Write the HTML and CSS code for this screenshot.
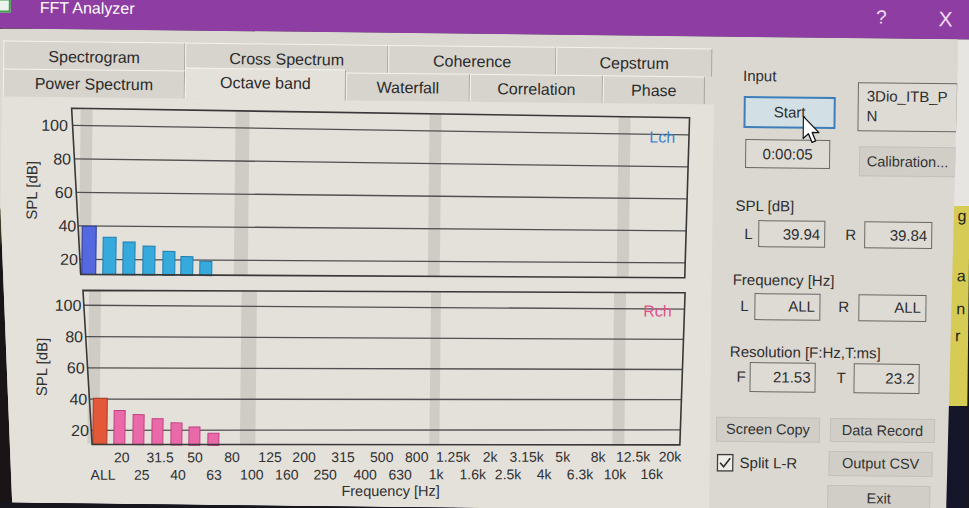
FILE: index.html
```html
<!DOCTYPE html>
<html lang="en">
<head>
<meta charset="utf-8">
<title>FFT Analyzer</title>
<link rel="stylesheet" href="styles.css">
</head>
<body>
<div class="screen">
  <header class="titlebar">
    <span class="app-icon"></span>
    <span class="title">FFT Analyzer</span>
    <span class="tb-help">?</span>
    <span class="tb-close">X</span>
  </header>
  <div class="main">
    <div class="window">
      <section class="tabs">
        <div class="tabrow back">
          <div class="tab w182">Spectrogram</div>
          <div class="tab w203">Cross Spectrum</div>
          <div class="tab w168">Coherence</div>
          <div class="tab w156">Cepstrum</div>
        </div>
        <div class="tabrow front">
          <div class="tab w182">Power Spectrum</div>
          <div class="tab w161 active">Octave band</div>
          <div class="tab w124">Waterfall</div>
          <div class="tab w133">Correlation</div>
          <div class="tab w102">Phase</div>
        </div>
        <div class="page">
          <svg class="charts" width="712" height="406" viewBox="0 0 712 406">
            <!-- upper chart (L channel) -->
            <g class="bands">
              <rect x="79" y="12" width="12" height="164"/>
              <rect x="234" y="12" width="14" height="164"/>
              <rect x="428" y="13" width="12" height="162"/>
              <rect x="617" y="13" width="12" height="161"/>
            </g>
            <g class="grid">
              <line x1="71.1" y1="28" x2="687.7" y2="30.6"/>
              <line x1="73.3" y1="61.5" x2="687.1" y2="62.6"/>
              <line x1="75.6" y1="95" x2="686.5" y2="94.6"/>
              <line x1="77.8" y1="128.4" x2="685.9" y2="126.6"/>
              <line x1="80" y1="161.9" x2="685.3" y2="158.6"/>
            </g>
            <g>
              <rect class="bar-all-l" x="82" y="128.7" width="14" height="48.1"/>
              <rect class="bar-l" x="103" y="139.5" width="13" height="37.3"/>
              <rect class="bar-l" x="123" y="144" width="12" height="32.8"/>
              <rect class="bar-l" x="143" y="148" width="12" height="28.8"/>
              <rect class="bar-l" x="163" y="153" width="12" height="23.8"/>
              <rect class="bar-l" x="181" y="158" width="12" height="18.8"/>
              <rect class="bar-l" x="200" y="162.5" width="12" height="14.3"/>
            </g>
            <polygon class="frame" points="70,11 688,13.5 685,173.5 81,177"/>
            <text class="ylab" x="66.5" y="33.8">100</text>
            <text class="ylab" x="70" y="67.3">80</text>
            <text class="ylab" x="72" y="100.8">60</text>
            <text class="ylab" x="76" y="134.2">40</text>
            <text class="ylab" x="78" y="167.7">20</text>
            <text class="axis-title" transform="translate(31 93.5) rotate(-90)">SPL [dB]</text>
            <text class="ch-l" x="648" y="38.6">Lch</text>

            <!-- lower chart (R channel) -->
            <g class="bands">
              <rect x="89.5" y="192" width="12" height="154"/>
              <rect x="242" y="191" width="15.5" height="155"/>
              <rect x="431.5" y="190" width="10" height="154"/>
              <rect x="614.5" y="189" width="12" height="153"/>
            </g>
            <g class="grid">
              <line x1="84.5" y1="207.8" x2="685.1" y2="204.9"/>
              <line x1="86.7" y1="239.05" x2="684.4" y2="235.1"/>
              <line x1="88.9" y1="270.3" x2="683.7" y2="265.25"/>
              <line x1="91.1" y1="301.55" x2="683" y2="295.4"/>
              <line x1="93.3" y1="332.8" x2="682.3" y2="325.6"/>
            </g>
            <g>
              <rect class="bar-all-r" x="95" y="300.6" width="14" height="45.9"/>
              <rect class="bar-r" x="116" y="312.6" width="11" height="33.9"/>
              <rect class="bar-r" x="135" y="316.5" width="11" height="30"/>
              <rect class="bar-r" x="154" y="320.4" width="11" height="26.1"/>
              <rect class="bar-r" x="173" y="324.3" width="11" height="22.2"/>
              <rect class="bar-r" x="191" y="328.3" width="11" height="18.2"/>
              <rect class="bar-r" x="210" y="334.3" width="11" height="12.2"/>
            </g>
            <polygon class="frame" points="83.4,192.9 685.5,188.5 682,340.6 94.3,346.8"/>
            <text class="ylab" x="82" y="213.6">100</text>
            <text class="ylab" x="84" y="244.9">80</text>
            <text class="ylab" x="86" y="276.1">60</text>
            <text class="ylab" x="89" y="307.4">40</text>
            <text class="ylab" x="91" y="338.6">20</text>
            <text class="axis-title" transform="translate(43 270) rotate(-90)">SPL [dB]</text>
            <text class="ch-r" x="644" y="212.6">Rch</text>

            <g class="xlabels" transform="rotate(-0.72 390 367)">
              <text x="124.2" y="361">20</text>
              <text x="162.5" y="361">31.5</text>
              <text x="197.5" y="361">50</text>
              <text x="234.5" y="361">80</text>
              <text x="272.5" y="361">125</text>
              <text x="306.5" y="361">200</text>
              <text x="345.5" y="361">315</text>
              <text x="384.2" y="361">500</text>
              <text x="419.2" y="361">800</text>
              <text x="455.5" y="361">1.25k</text>
              <text x="492.5" y="361">2k</text>
              <text x="529.2" y="361">3.15k</text>
              <text x="565.2" y="361">5k</text>
              <text x="600.5" y="361">8k</text>
              <text x="635.5" y="361">12.5k</text>
              <text x="672.5" y="361">20k</text>

              <text x="105.5" y="378.5">ALL</text>
              <text x="144.2" y="378.5">25</text>
              <text x="180.5" y="378.5">40</text>
              <text x="216.5" y="378.5">63</text>
              <text x="254.2" y="378.5">100</text>
              <text x="289.2" y="378.5">160</text>
              <text x="327.5" y="378.5">250</text>
              <text x="367.5" y="378.5">400</text>
              <text x="402.5" y="378.5">630</text>
              <text x="438.5" y="378.5">1k</text>
              <text x="475.2" y="378.5">1.6k</text>
              <text x="510.5" y="378.5">2.5k</text>
              <text x="546.5" y="378.5">4k</text>
              <text x="582.5" y="378.5">6.3k</text>
              <text x="617.5" y="378.5">10k</text>
              <text x="654.2" y="378.5">16k</text>

              <text class="freq-title" x="393" y="395">Frequency [Hz]</text>
            </g>
          </svg>
        </div>
      </section>

      <aside class="controls">
        <div class="top">
          <div class="col-l">
            <span class="lbl-input">Input</span>
            <div class="start">Start
              <svg class="cursor" viewBox="0 0 12.5 19.5" width="18" height="28">
                <path d="M0.5 0.5 V16 L4.2 12.6 L6.8 18.6 L9.3 17.5 L6.8 11.7 H11.5 Z"/>
              </svg>
            </div>
            <div class="field time">0:00:05</div>
          </div>
          <div class="col-r">
            <div class="device">3Dio_ITB_P<br>N</div>
            <div class="btn calib">Calibration...</div>
          </div>
        </div>

        <span class="lbl-spl">SPL [dB]</span>
        <div class="pair row-spl">
          <span class="k">L</span><span class="field f1">39.94</span>
          <span class="k k2">R</span><span class="field f2">39.84</span>
        </div>

        <span class="lbl-freq">Frequency [Hz]</span>
        <div class="pair row-freq">
          <span class="k">L</span><span class="field f1">ALL</span>
          <span class="k k2">R</span><span class="field f2">ALL</span>
        </div>

        <span class="lbl-res">Resolution [F:Hz,T:ms]</span>
        <div class="pair row-res">
          <span class="k">F</span><span class="field f1">21.53</span>
          <span class="k k2">T</span><span class="field f2">23.2</span>
        </div>

        <div class="row-btn1">
          <div class="btn screen-copy">Screen Copy</div>
          <div class="btn data-record">Data Record</div>
        </div>
        <div class="row-btn2">
          <div class="check">
            <svg class="checkbox" viewBox="0 0 17 18" width="17" height="18">
              <rect x="0.75" y="0.75" width="15.5" height="16.5"/>
              <polyline points="3.5,9 7,13 13.5,4.5"/>
            </svg>
            <span class="check-label">Split L-R</span>
          </div>
          <div class="btn output-csv">Output CSV</div>
        </div>
        <div class="btn exit">Exit</div>
      </aside>
    </div>
    <div class="beyond">
      <span class="bg-g">g</span>
      <span class="bg-a">a</span>
      <span class="bg-n">n</span>
      <span class="bg-r">r</span>
    </div>
  </div>
</div>
</body>
</html>
```

FILE: styles.css
```css
* { box-sizing: border-box; }

html, body {
  margin: 0;
  padding: 0;
  width: 969px;
  height: 508px;
  overflow: hidden;
  background: #17161f;
}

.screen {
  width: 989px;
  height: 528px;
  margin: -10px;
  padding: 10px;
  display: flex;
  flex-direction: column;
  background: #17161f;
  transform: rotate(0.65deg);
  transform-origin: 494.5px 264px;
  font-family: "Liberation Sans", Arial, sans-serif;
  color: #2e2e2e;
}

/* ---------- title bar ---------- */
.titlebar {
  flex: none;
  height: 44px;
  margin: -10px -10px 0;
  padding: 10px 10px 0;
  display: flex;
  align-items: flex-start;
  background: #8e3da2;
  color: #ffffff;
}
.app-icon {
  flex: none;
  width: 14px;
  height: 14px;
  margin: 4px 0 0 -6px;
  border: 2px solid #3f9f4f;
  background: #eef2ec;
}
.title {
  margin: 4px 0 0 29px;
  font-size: 16px;
  line-height: 18px;
}
.tb-help {
  margin: 3px 0 0 auto;
  font-size: 19px;
  line-height: 20px;
  color: #f3dcf3;
}
.tb-close {
  margin: 3px 19px 0 52px;
  font-size: 21px;
  line-height: 22px;
  color: #f3dcf3;
}

/* ---------- main area ---------- */
.main {
  flex: 1;
  min-height: 0;
  display: flex;
  background:
    linear-gradient(to right, #1a1417 0 30px, transparent 30px),
    linear-gradient(to bottom, #e7e5e1 0 167px, #d6cb55 167px 367px, #16162a 367px);
}
.window {
  flex: none;
  width: 966px;
  margin-left: -10px;
  padding-left: 10px;
  display: flex;
  background: #dbd8d2;
  clip-path: polygon(0 0, 100% 0, calc(100% - 7px) 100%, 25px 100%, 10px 180px, 0 180px);
}

/* ---------- tabs ---------- */
.tabs {
  flex: none;
  width: 712px;
  display: flex;
  flex-direction: column;
  padding-top: 12px;
}
.tabrow {
  flex: none;
  height: 28px;
  display: flex;
  align-items: flex-end;
  padding-left: 1px;
}
.tab {
  flex: none;
  height: 28px;
  text-align: center;
  white-space: nowrap;
  font-size: 16px;
  line-height: 18px;
  color: #2b2b2b;
  background: #d7d4ce;
  border-top: 1px solid #f4f2ee;
  border-left: 1px solid #f4f2ee;
  border-right: 1px solid #a9a6a0;
}
.back .tab { padding-top: 6px; }
.front .tab { padding-top: 5px; }
.tab.active {
  height: 31px;
  background: #e4e1db;
  position: relative;
  z-index: 1;
}
.w182 { width: 182px; }
.w203 { width: 203px; }
.w168 { width: 168px; }
.w156 { width: 156px; }
.w161 { width: 161px; }
.w124 { width: 124px; }
.w133 { width: 133px; }
.w102 { width: 102px; }

.page {
  flex: 1;
  background: #e4e1db;
}

/* ---------- charts ---------- */
.charts { display: block; }
.charts text {
  font-family: "Liberation Sans", Arial, sans-serif;
  fill: #303030;
}
.bands rect { fill: #cfccc6; }
.grid line { stroke: #505050; stroke-width: 1.3; }
.frame { fill: none; stroke: #383838; stroke-width: 1.6; }
.bar-all-l { fill: #5468e0; stroke: #2b3a9a; stroke-width: 1; }
.bar-l { fill: #36a9dd; stroke: #1d7fb2; stroke-width: 1; }
.bar-all-r { fill: #e4583a; stroke: #a83a22; stroke-width: 1; }
.bar-r { fill: #ea6aa9; stroke: #bf3f80; stroke-width: 1; }
.ylab { font-size: 16px; text-anchor: end; }
.axis-title { font-size: 15px; text-anchor: middle; dominant-baseline: central; }
.ch-l { font-size: 16px; fill: #3d86d6 !important; }
.ch-r { font-size: 16px; fill: #e0508a !important; }
.xlabels text { font-size: 14px; text-anchor: middle; }
.xlabels .freq-title { font-size: 14.5px; }

/* ---------- controls ---------- */
.controls {
  flex: 1;
  display: flex;
  flex-direction: column;
  align-items: flex-start;
  padding-top: 30px;
  font-size: 15px;
  line-height: 18px;
  color: #2e2e2e;
}
.top {
  display: flex;
  align-items: flex-start;
  margin-left: 28px;
}
.col-l {
  width: 96px;
  display: flex;
  flex-direction: column;
  align-items: flex-start;
}
.lbl-input { margin-left: 1px; }
.start {
  position: relative;
  margin: 11px 0 0 2px;
  width: 92px;
  height: 32px;
  border: 2px solid #3d7db8;
  background: #d2e0e6;
  text-align: center;
  line-height: 28px;
}
.cursor {
  position: absolute;
  left: 56.6px;
  top: 16.8px;
}
.cursor path {
  fill: #ffffff;
  stroke: #111111;
  stroke-width: 0.9;
  stroke-linejoin: round;
}
.field {
  border: 1px solid #6a6864;
  background: #dedbd5;
  text-align: right;
  padding-right: 4px;
  white-space: nowrap;
}
.time {
  margin: 11px 0 0 4px;
  width: 85px;
  height: 29px;
  text-align: center;
  padding-right: 0;
  line-height: 27px;
}
.col-r {
  margin-left: 20px;
  display: flex;
  flex-direction: column;
  align-items: flex-start;
}
.device {
  margin-top: 14px;
  width: 100px;
  height: 49px;
  padding: 3px 0 0 8px;
  line-height: 20px;
  border: 1px solid #6a6864;
  background: #dedbd5;
}
.btn {
  background: #d1cec8;
  border: 1px solid #c4c1bb;
  text-align: center;
  font-size: 14.5px;
  color: #333333;
  white-space: nowrap;
}
.calib {
  margin: 15px 0 0 2px;
  width: 97px;
  height: 30px;
  line-height: 28px;
}

.lbl-spl { margin: 22px 0 0 23px; }
.lbl-freq { margin: 24px 0 0 21px; }
.lbl-res { margin: 23px 0 0 19px; }

.pair { display: flex; align-items: stretch; }
.pair .k { flex: none; }
.row-spl { margin: 4.5px 0 0 32px; height: 27.5px; line-height: 25.5px; }
.row-spl .k { width: 13.5px; line-height: 27.5px; }
.row-spl .k2 { margin-left: 20px; width: 19px; }
.row-spl .f1 { width: 67.5px; }
.row-spl .f2 { width: 68px; }

.row-freq { margin: 4px 0 0 29px; height: 26.5px; line-height: 24.5px; }
.row-freq .k { width: 13.5px; line-height: 26.5px; }
.row-freq .k2 { margin-left: 18.5px; width: 19.5px; }
.row-freq .f1 { width: 66px; }
.row-freq .f2 { width: 68px; }

.row-res { margin: 1px 0 0 26px; height: 30px; line-height: 28px; }
.row-res .k { width: 13px; line-height: 30px; }
.row-res .k2 { margin-left: 21px; width: 17px; }
.row-res .f1 { width: 66px; }
.row-res .f2 { width: 66px; }

.row-btn1 {
  display: flex;
  align-items: flex-start;
  margin: 25px 0 0 6px;
}
.screen-copy { width: 104px; height: 25px; line-height: 23px; }
.data-record { margin-left: 10px; width: 105px; height: 24.5px; line-height: 22.5px; }

.row-btn2 {
  display: flex;
  align-items: flex-start;
  margin: 8.5px 0 0 7px;
}
.check {
  width: 112px;
  height: 25px;
  display: flex;
  align-items: center;
}
.checkbox rect { fill: #eeece8; stroke: #3c3c3c; stroke-width: 1.5; }
.checkbox polyline { fill: none; stroke: #2a2a2a; stroke-width: 1.6; }
.check-label { margin-left: 6px; }
.output-csv { width: 104px; height: 25px; line-height: 23px; }
.exit {
  margin: 8.5px 0 0 118px;
  width: 103px;
  height: 26px;
  line-height: 24px;
}

/* ---------- what lies behind the window ---------- */
.beyond {
  flex: 1;
  min-width: 0;
  display: flex;
  flex-direction: column;
  align-items: flex-start;
  padding-top: 167px;
  font-size: 16px;
  line-height: 20px;
  color: #231f1c;
}
.bg-g { margin-left: 1px; }
.bg-a { margin: 40px 0 0 1px; }
.bg-n { margin: 13px 0 0 1px; }
.bg-r { margin: 7px 0 0 0; }
```
